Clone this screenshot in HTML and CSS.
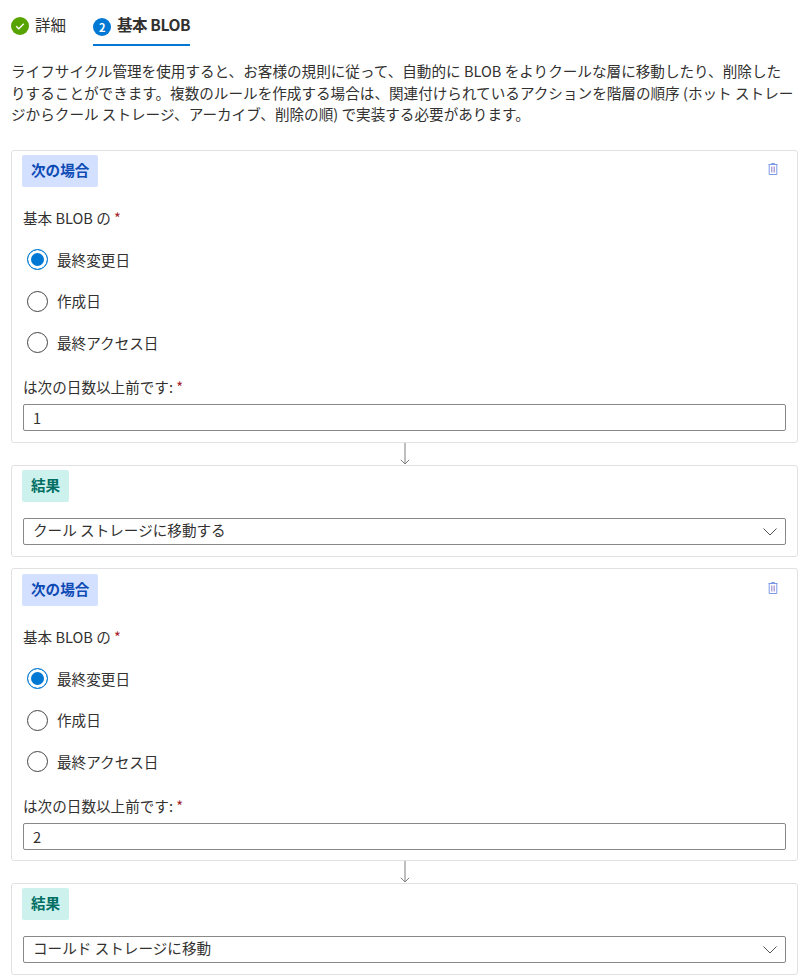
FILE: index.html
```html
<!DOCTYPE html>
<html lang="ja">
<head>
    <meta charset="UTF-8">
    <meta name="viewport" content="width=device-width, initial-scale=1.0">
    <title>基本 BLOB</title>
    <link rel="stylesheet" href="styles.css">
</head>
<body>
    <div class="steps">
        <div class="step">
            <svg class="step-icon" viewBox="0 0 18 18" width="18" height="18">
                <circle cx="9" cy="9" r="9" fill="#57a300"/>
                <path d="M5.2 9.3l2.6 2.5 5-5" fill="none" stroke="#fff" stroke-width="1.4"/>
            </svg>
            <span>詳細</span>
        </div>
        <div class="step step-active">
            <span class="step-num">2</span>
            <span>基本 BLOB</span>
        </div>
    </div>

    <p class="intro">ライフサイクル管理を使用すると、お客様の規則に従って、自動的に BLOB をよりクールな層に移動したり、削除したりすることができます。複数のルールを作成する場合は、関連付けられているアクションを階層の順序 (ホット ストレージからクール ストレージ、アーカイブ、削除の順) で実装する必要があります。</p>

    <div class="card card-if">
        <div class="card-head">
            <span class="tag tag-if">次の場合</span>
            <svg class="trash" viewBox="0 0 10 12" width="10" height="12">
                <path d="M3.5 1.5v-1h3v1M.5 1.5h9M1.2 1.5v10h7.6v-10" fill="none" stroke="#7a9ae8"/>
                <path d="M3.5 3.5v6M5 3.5v6M6.5 3.5v6" fill="none" stroke="#b3a6d8"/>
            </svg>
        </div>
        <div class="field-label">基本 BLOB の <span class="req">*</span></div>
        <div class="radios">
            <div class="radio-row"><span class="radio radio-on"></span>最終変更日</div>
            <div class="radio-row"><span class="radio"></span>作成日</div>
            <div class="radio-row"><span class="radio"></span>最終アクセス日</div>
        </div>
        <div class="field-label field-days">は次の日数以上前です: <span class="req">*</span></div>
        <div class="box">1</div>
    </div>

    <div class="arrow">
        <svg viewBox="0 0 10 22" width="10" height="22">
            <path d="M5 0v21M.8 16.8L5 21l4.2-4.2" fill="none" stroke="#7f7f7f"/>
        </svg>
    </div>

    <div class="card card-then">
        <div class="card-head">
            <span class="tag tag-then">結果</span>
        </div>
        <div class="box box-select">
            クール ストレージに移動する
            <svg viewBox="0 0 14 8" width="14" height="8">
                <path d="M.5.5L7 7l6.5-6.5" fill="none" stroke="#555"/>
            </svg>
        </div>
    </div>

    <div class="card card-if card-next">
        <div class="card-head">
            <span class="tag tag-if">次の場合</span>
            <svg class="trash" viewBox="0 0 10 12" width="10" height="12">
                <path d="M3.5 1.5v-1h3v1M.5 1.5h9M1.2 1.5v10h7.6v-10" fill="none" stroke="#7a9ae8"/>
                <path d="M3.5 3.5v6M5 3.5v6M6.5 3.5v6" fill="none" stroke="#b3a6d8"/>
            </svg>
        </div>
        <div class="field-label">基本 BLOB の <span class="req">*</span></div>
        <div class="radios">
            <div class="radio-row"><span class="radio radio-on"></span>最終変更日</div>
            <div class="radio-row"><span class="radio"></span>作成日</div>
            <div class="radio-row"><span class="radio"></span>最終アクセス日</div>
        </div>
        <div class="field-label field-days">は次の日数以上前です: <span class="req">*</span></div>
        <div class="box">2</div>
    </div>

    <div class="arrow">
        <svg viewBox="0 0 10 22" width="10" height="22">
            <path d="M5 0v21M.8 16.8L5 21l4.2-4.2" fill="none" stroke="#7f7f7f"/>
        </svg>
    </div>

    <div class="card card-then">
        <div class="card-head">
            <span class="tag tag-then">結果</span>
        </div>
        <div class="box box-select">
            コールド ストレージに移動
            <svg viewBox="0 0 14 8" width="14" height="8">
                <path d="M.5.5L7 7l6.5-6.5" fill="none" stroke="#555"/>
            </svg>
        </div>
    </div>
</body>
</html>
```

FILE: styles.css
```css
html, body {
    height: 975px;
    overflow: hidden;
}
body {
    font-family: "Noto Sans CJK JP", "Noto Sans", sans-serif;
    font-size: 14.6px;
    line-height: 20px;
    margin: 0;
    padding: 0 2px 0 11px;
    background-color: #fff;
    color: #323130;
}
.steps {
    display: flex;
    height: 46px;
    gap: 27px;
    box-sizing: border-box;
    font-size: 15.5px;
}
.step {
    display: flex;
    align-items: flex-start;
    gap: 6px;
    padding-top: 14px;
}
.step-icon {
    margin-top: 3px;
}
.step-active {
    font-weight: 700;
    border-bottom: 2px solid #0078d4;
    letter-spacing: -0.4px;
}
.step-num {
    width: 18px;
    height: 18px;
    margin-top: 4px;
    border-radius: 50%;
    background-color: #0078d4;
    color: #fff;
    font-size: 11px;
    line-height: 18px;
    text-align: center;
}
.intro {
    margin: 14px 0 0;
    height: 90px;
    line-height: 21.7px;
    width: 783px;
}
.card {
    box-sizing: border-box;
    border: 1px solid #e1e1e1;
    border-radius: 3px;
    padding: 4px 11px 11px;
}
.card-if {
    height: 293px;
}
.card-then {
    height: 92px;
}
.card-next {
    margin-top: 11px;
    padding-top: 5px;
}
.card-head {
    display: flex;
    justify-content: space-between;
    align-items: flex-start;
}
.card-then .card-head {
    margin-bottom: 16px;
}
.tag {
    height: 32px;
    padding: 0 9px;
    margin-left: -1px;
    border-radius: 2px;
    font-weight: 700;
    line-height: 30px;
}
.tag-if {
    background-color: #d3e0ff;
    color: #0e4bb5;
}
.tag-then {
    background-color: #cdf2ee;
    color: #006e63;
}
.trash {
    margin: 8px 8px 0 0;
}
.field-label {
    margin-top: 21px;
}
.req {
    color: #a4262c;
}
.radios {
    margin: 11px 0 0 4px;
}
.radio-row {
    display: flex;
    align-items: center;
    gap: 9px;
    height: 41.5px;
}
.radio {
    box-sizing: border-box;
    width: 21px;
    height: 21px;
    border: 1px solid #444;
    border-radius: 50%;
    background-color: #fff;
}
.radio-on {
    border-color: #0078d4;
    background-color: #0078d4;
    box-shadow: inset 0 0 0 3px #fff;
}
.field-days {
    margin-top: 13px;
}
.box {
    box-sizing: border-box;
    height: 27px;
    margin-top: 7px;
    padding: 0 9px;
    border: 1px solid #8a8886;
    border-radius: 2px;
    line-height: 25px;
}
.box-select {
    display: flex;
    justify-content: space-between;
    align-items: center;
    margin-top: 0;
    padding-right: 8px;
    line-height: 22px;
    padding-bottom: 4px;
}
.box-select svg {
    margin-top: 4px;
}
.arrow {
    display: flex;
    justify-content: center;
    height: 22px;
}
```
